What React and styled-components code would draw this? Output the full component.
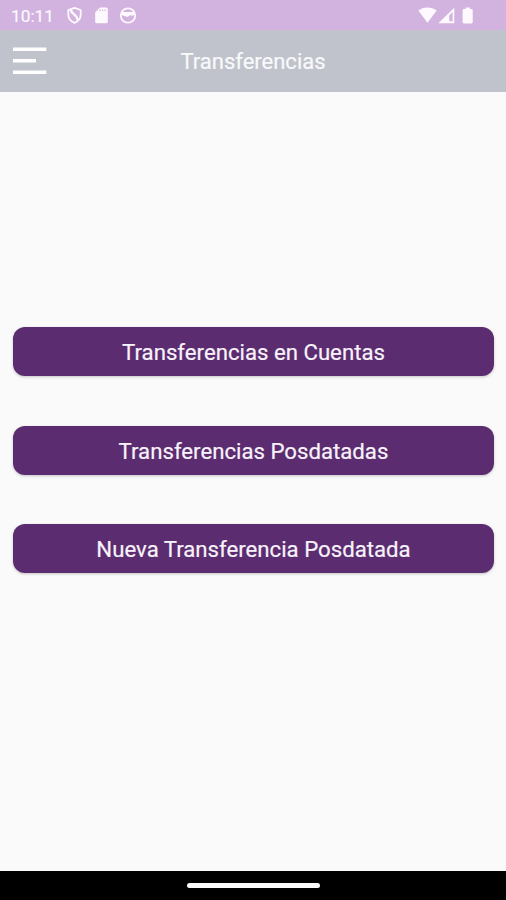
import React from 'react'
import styled, { createGlobalStyle } from 'styled-components'

const GlobalStyle = createGlobalStyle`
    body {
        margin: 0;
        background: #fafafa;
        font-family: Roboto, "Liberation Sans", sans-serif;
    }
`;

const Container = styled.div`
    height: 100vh;
    display: flex;
    flex-direction: column;
    background: #fafafa;
`;

const StatusBar = styled.div`
    box-sizing: border-box;
    height: 30px;
    padding: 0 33px 0 11px;
    display: flex;
    align-items: center;
    background: #d2b2df;
    color: #fdf9ff;
`;

const Time = styled.span`
    width: 55px;
    padding-top: 1px;
    font-size: 17.3px;
    -webkit-text-stroke: 0.15px;
`;

const StatusIcons = styled.div`
    display: flex;
    flex: ${props => props.$grow ? 1 : 'none'};

    svg {
        display: block;
    }
`;

const Header = styled.header`
    box-sizing: border-box;
    height: 61.5px;
    padding: 0 12px;
    display: grid;
    grid-template-columns: 36px 1fr 36px;
    align-items: center;
    background: #c0c3cb;
`;

const MenuButton = styled.button`
    padding: 0;
    border: none;
    background: none;
    cursor: pointer;

    svg {
        display: block;
    }
`;

const Title = styled.h1`
    margin: 0;
    padding-top: 2px;
    color: #f8f9fb;
    font-size: 22px;
    font-weight: 400;
    text-align: center;
    -webkit-text-stroke: 0.2px;
`;

const Options = styled.main`
    flex: 1;
    padding: 235.6px 12px 0 13px;
    display: flex;
    flex-direction: column;
    gap: 49.6px;
`;

const Option = styled.button`
    height: 49px;
    padding: 1px 0 0;
    border: none;
    border-radius: 12px;
    background: #5b2c6f;
    box-shadow: 0 1px 3px rgba(0, 0, 0, 0.22);
    color: #f8f2fb;
    font-family: inherit;
    font-size: 22.2px;
    -webkit-text-stroke: 0.2px;
    cursor: pointer;
`;

const NavigationBar = styled.footer`
    height: 29px;
    display: flex;
    align-items: center;
    justify-content: center;
    background: #000;
`;

const HomeIndicator = styled.div`
    width: 133px;
    height: 5px;
    border-radius: 3px;
    background: #fafafa;
`;

const options = [
    'Transferencias en Cuentas',
    'Transferencias Posdatadas',
    'Nueva Transferencia Posdatada',
]

function NotificationIcons() {
    return (
        <svg width="72" height="30" viewBox="66 0 72 30" fill="none">
            {/* shield */}
            <path d="M74.5 7.8 L80.7 10 V14.5 C80.7 18.5 78.2 21.4 74.5 22.8 C70.8 21.4 68.3 18.5 68.3 14.5 V10 Z" stroke="currentColor" strokeWidth="1.8" strokeLinejoin="round" />
            <path d="M71 9.5 C70.6 14.5 78.2 14.5 77.4 20.3" stroke="currentColor" strokeWidth="2.4" />
            {/* sd card */}
            <path fillRule="evenodd" d="M100 7.5 H106.3 Q107.8 7.5 107.8 9 V21.7 Q107.8 23.3 106.3 23.3 H96.7 Q95.2 23.3 95.2 21.7 V12.3 Z M99.5 9.5 V11 H100.7 V9.5 Z M102 9.5 V11 H103.2 V9.5 Z M104.5 9.5 V11 H105.7 V9.5 Z" fill="currentColor" />
            {/* face */}
            <circle cx="128" cy="15.5" r="7.2" stroke="currentColor" strokeWidth="1.8" />
            <path d="M121.5 12 H134.5 V15 L132.2 15.8 L130 15.2 L127.5 17 L124.5 16 L121.5 15 Z" fill="currentColor" />
        </svg>
    )
}

function SystemIcons() {
    return (
        <svg width="56" height="30" viewBox="417 0 56 30" fill="currentColor">
            {/* wifi */}
            <path d="M418.3 10.6 C423.5 6.5 431.3 6.5 436.7 10.6 L427.5 22.8 Z" />
            {/* signal */}
            <path fillRule="evenodd" d="M454.3 7.8 V23.2 H438.3 Z M452.6 12 L449.3 15.3 V21.3 H452.6 Z" />
            {/* battery */}
            <path d="M465.6 7.4 H469.8 V9 H471.4 Q472.7 9 472.7 10.3 V22 Q472.7 23.4 471.4 23.4 H464 Q462.6 23.4 462.6 22 V10.3 Q462.6 9 464 9 H465.6 Z" />
        </svg>
    )
}

function App() {
    return (
        <Container>
            <GlobalStyle />
            <StatusBar>
                <Time>10:11</Time>
                <StatusIcons $grow>
                    <NotificationIcons />
                </StatusIcons>
                <StatusIcons>
                    <SystemIcons />
                </StatusIcons>
            </StatusBar>
            <Header>
                <MenuButton aria-label="Menú">
                    <svg width="36" height="28" viewBox="0 0 36 28" fill="none" stroke="#fff" strokeWidth="3.6">
                        <path d="M1 2.2 H34.3 M1 13.7 H24 M1 25.3 H34.3" />
                    </svg>
                </MenuButton>
                <Title>Transferencias</Title>
            </Header>
            <Options>
                {options.map((option) => (
                    <Option key={option}>{option}</Option>
                ))}
            </Options>
            <NavigationBar>
                <HomeIndicator />
            </NavigationBar>
        </Container>
    )
}

export default App
